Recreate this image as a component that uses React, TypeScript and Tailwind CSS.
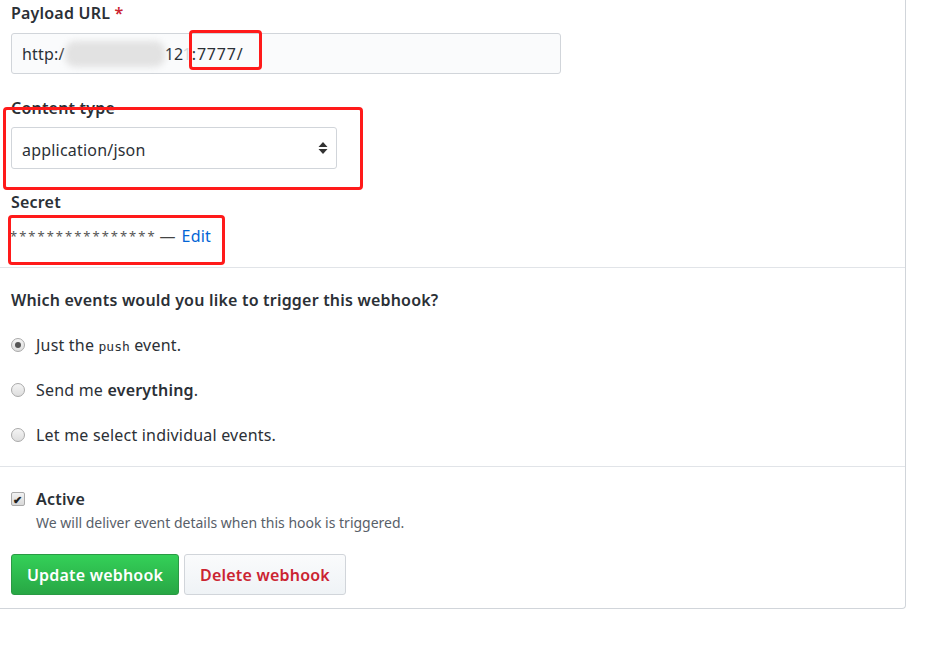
import React from "react";

const font = { fontFamily: '"Noto Sans", "Open Sans", Arial, sans-serif' };

function Radio({ checked }: { checked?: boolean }) {
  return (
    <span className="w-[14px] h-[14px] rounded-full border border-[#a9a9a9] bg-gradient-to-b from-[#f4f4f4] to-[#dedede] flex items-center justify-center shrink-0">
      {checked && <span className="w-[6px] h-[6px] rounded-full bg-[#555]" />}
    </span>
  );
}

function Annot({ className }: { className: string }) {
  return (
    <div
      className={`absolute border-[3px] border-[#ff1a1a] rounded-[4px] pointer-events-none ${className}`}
    />
  );
}

export default function App() {
  return (
    <div
      className="relative w-[934px] h-[655px] bg-white overflow-hidden text-[#2b3036] tracking-[0.2px]"
      style={font}
    >
      <div className="w-[906px] border-r border-b border-[#d1d5da] rounded-br-[4px]">
        {/* webhook settings */}
        <div className="pl-[11px] pt-[1px] pb-[19px] border-b border-[#e1e4e8]">
          <div className="text-[16px] leading-[24px] font-semibold">
            Payload URL <span className="text-[#cb2431]">*</span>
          </div>
          <div className="mt-[8px] w-[550px] h-[41px] rounded-[3px] border border-[#d1d5da] bg-[#fafbfc] flex items-center pl-[10px] pt-[1px] text-[16px]">
            <span>http:/</span>
            <span className="inline-block w-[100px] h-[26px] bg-[#e2e2e2] blur-[3px] rounded-[10px]" />
            <span>12</span>
            <span className="text-[#d8d8d8] -ml-[1px]">1</span>
            <span className="tracking-[0.8px]">:7777/</span>
          </div>

          <div className="mt-[22px] text-[16px] leading-[24px] font-semibold">Content type</div>
          <div className="mt-[7px] w-[326px] h-[42px] rounded-[3px] border border-[#d1d5da] bg-white flex items-center justify-between pl-[10px] pr-[8px] pt-[3px] text-[16px]">
            <span>application/json</span>
            <svg width="10" height="14" viewBox="0 0 10 14" className="-mt-[3px]">
              <path d="M5 1 L9.5 6 H0.5 Z" fill="#333" />
              <path d="M5 13 L9.5 8 H0.5 Z" fill="#333" />
            </svg>
          </div>

          <div className="mt-[21px] text-[16px] leading-[24px] font-semibold">Secret</div>
          <div className="mt-[10px] text-[16px] leading-[24px] flex items-center">
            <span className="text-[#555] text-[13px] tracking-[2px] -ml-[1px]">****************</span>
            <span className="ml-[3px] text-[#444] w-[16px]">—</span>
            <span className="ml-[6px] text-[#0366d6]">Edit</span>
          </div>
        </div>

        {/* events */}
        <div className="pl-[11px] pt-[20px] pb-[19px] border-b border-[#e1e4e8]">
          <div className="text-[16px] leading-[24px] font-semibold">
            Which events would you like to trigger this webhook?
          </div>
          <div className="mt-[21px] flex flex-col gap-[21px] text-[16px] leading-[24px]">
            <label className="flex items-center gap-[11px] h-[24px]">
              <Radio checked />
              <span>
                Just the{" "}
                <code
                  className="text-[13px] leading-none tracking-normal"
                  style={{ fontFamily: '"DejaVu Sans Mono", monospace' }}
                >
                  push
                </code>{" "}
                event.
              </span>
            </label>
            <label className="flex items-center gap-[11px] h-[24px]">
              <Radio />
              <span>
                Send me <b className="font-semibold">everything</b>.
              </span>
            </label>
            <label className="flex items-center gap-[11px] h-[24px]">
              <Radio />
              <span>Let me select individual events.</span>
            </label>
          </div>
        </div>

        {/* active + actions */}
        <div className="pl-[11px] pt-[20px] pb-[13px]">
          <label className="flex items-center gap-[11px] text-[16px] leading-[24px] font-semibold">
            <span className="w-[14px] h-[14px] rounded-[2px] border border-[#a9a9a9] bg-gradient-to-b from-[#f2f2f2] to-[#d9d9d9] flex items-center justify-center text-[11px] leading-none text-[#222]">
              ✔
            </span>
            Active
          </label>
          <div className="mt-[4px] pl-[25px] text-[14px] leading-[16px] tracking-normal text-[#586069]">
            We will deliver event details when this hook is triggered.
          </div>
          <div className="mt-[23px] flex gap-[5px]">
            <button className="h-[41px] w-[168px] rounded-[3px] border border-[#2a9a44] bg-gradient-to-b from-[#34d058] to-[#28a745] text-white text-[16px] font-semibold">
              Update webhook
            </button>
            <button className="h-[41px] w-[162px] rounded-[3px] border border-[#d1d5da] bg-gradient-to-b from-[#fafbfc] to-[#eff3f6] text-[#cb2431] text-[16px] font-semibold">
              Delete webhook
            </button>
          </div>
        </div>
      </div>

      <Annot className="left-[189px] top-[30px] w-[73px] h-[40px]" />
      <Annot className="left-[3px] top-[107px] w-[360px] h-[83px]" />
      <Annot className="left-[8px] top-[215px] w-[217px] h-[50px]" />
    </div>
  );
}
